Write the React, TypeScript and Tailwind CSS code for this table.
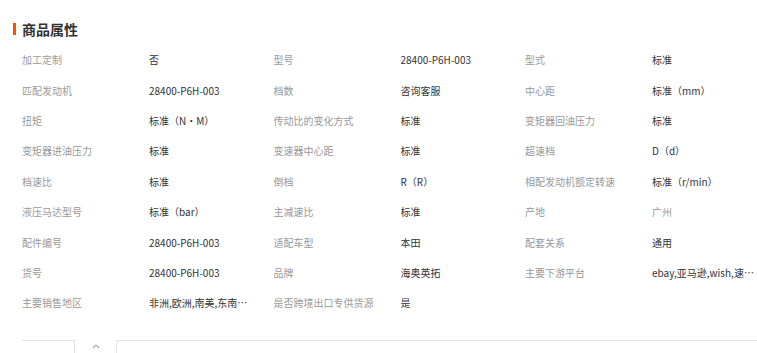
const rows: [string, string][][] = [
  [["加工定制", "否"], ["型号", "28400-P6H-003"], ["型式", "标准"]],
  [["匹配发动机", "28400-P6H-003"], ["档数", "咨询客服"], ["中心距", "标准（mm）"]],
  [["扭矩", "标准（N·M）"], ["传动比的变化方式", "标准"], ["变矩器回油压力", "标准"]],
  [["变矩器进油压力", "标准"], ["变速器中心距", "标准"], ["超速档", "D（d）"]],
  [["档速比", "标准"], ["倒档", "R（R）"], ["相配发动机额定转速", "标准（r/min）"]],
  [["液压马达型号", "标准（bar）"], ["主减速比", "标准"], ["产地", "广州"]],
  [["配件编号", "28400-P6H-003"], ["适配车型", "本田"], ["配套关系", "通用"]],
  [["货号", "28400-P6H-003"], ["品牌", "海奥英拓"], ["主要下游平台", "ebay,亚马逊,wish,速卖通,独立站,LAZADA"]],
  [["主要销售地区", "非洲,欧洲,南美,东南亚,北美,东北亚,中东"], ["是否跨境出口专供货源", "是"]],
];

const App = () => {
  return (
    <div className="w-[757px] h-[353px] overflow-hidden bg-white font-['Noto_Sans_CJK_SC',sans-serif]">
      <div className="flex items-center pt-[21px] pl-[13px] h-[37px]">
        <span className="w-[3px] h-[12px] bg-[#ff5000]" />
        <span className="ml-[6px] text-[14px] font-bold text-[#333] leading-none">商品属性</span>
      </div>
      <div className="pl-[22px] mt-[8px]">
        {rows.map((row, i) => (
          <div key={i} className="flex h-[30.4px] items-center text-[10px] leading-none">
            {row.map(([label, value], j) => (
              <div key={j} className="flex w-[251.5px] shrink-0 items-center">
                <span className="w-[127px] shrink-0 text-[#999] whitespace-nowrap">{label}</span>
                <span
                  className={
                    "w-[104px] truncate whitespace-nowrap leading-[14px] " +
                    (value === "广州" ? "text-[#999]" : "text-[#333]")
                  }
                >
                  {value}
                </span>
              </div>
            ))}
          </div>
        ))}
      </div>
      <div className="flex mt-[21px] ml-[22px] h-[14px]">
        <div className="w-[52px] border-t border-[#e5e5e5]" />
        <div className="w-[43px] border-x border-[#e5e5e5] flex justify-center">
          <svg width="8" height="6" viewBox="0 0 8 6" className="mt-[3px] ml-[1px]">
            <path d="M1 5 L4 2 L7 5" fill="none" stroke="#aaa" strokeWidth="1.2" />
          </svg>
        </div>
        <div className="flex-1 border-t border-[#e5e5e5]" />
      </div>
    </div>
  );
};

export default App;
